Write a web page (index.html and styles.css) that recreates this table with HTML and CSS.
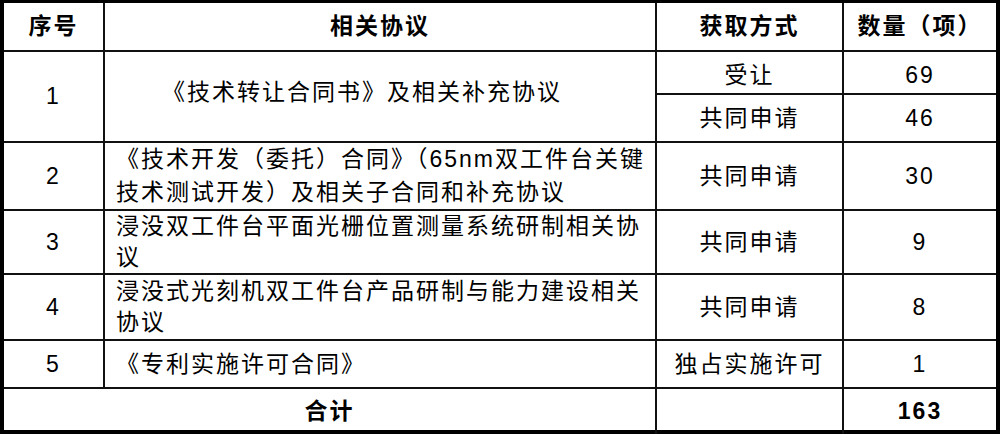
FILE: index.html
```html
<!DOCTYPE html>
<html lang="zh-CN">
<head>
<meta charset="utf-8">
<title>相关协议</title>
<link rel="stylesheet" href="styles.css">
</head>
<body>
<div class="frame">
  <table class="grid">
    <colgroup>
      <col class="c1"><col class="c2"><col class="c3"><col class="c4">
    </colgroup>
    <thead>
      <tr class="r-head">
        <th>序号</th>
        <th>相关协议</th>
        <th>获取方式</th>
        <th>数量（项）</th>
      </tr>
    </thead>
    <tbody>
      <tr class="r-1a">
        <td rowspan="2">1</td>
        <td rowspan="2" class="desc-center">《技术转让合同书》及相关补充协议</td>
        <td class="low">受让</td>
        <td class="low">69</td>
      </tr>
      <tr class="r-1b">
        <td>共同申请</td>
        <td>46</td>
      </tr>
      <tr class="r-2">
        <td>2</td>
        <td class="desc wide">《技术开发（委托）合同》（65nm双工件台关键<br>技术测试开发）及相关子合同和补充协议</td>
        <td>共同申请</td>
        <td>30</td>
      </tr>
      <tr class="r-3">
        <td>3</td>
        <td class="desc">浸没双工件台平面光栅位置测量系统研制相关协<br>议</td>
        <td>共同申请</td>
        <td>9</td>
      </tr>
      <tr class="r-4">
        <td>4</td>
        <td class="desc">浸没式光刻机双工件台产品研制与能力建设相关<br>协议</td>
        <td>共同申请</td>
        <td>8</td>
      </tr>
      <tr class="r-5">
        <td>5</td>
        <td class="desc">《专利实施许可合同》</td>
        <td>独占实施许可</td>
        <td>1</td>
      </tr>
      <tr class="r-total">
        <td colspan="2" class="strong">合计</td>
        <td></td>
        <td class="strong">163</td>
      </tr>
    </tbody>
  </table>
</div>
</body>
</html>
```

FILE: styles.css
```css
html, body {
  margin: 0;
  padding: 0;
  background: #ffffff;
}

.frame {
  box-sizing: border-box;
  width: 1000px;
  height: 434px;
  border-style: solid;
  border-color: #000000;
  border-width: 3px 4px 4px 4px;
  background: #ffffff;
}

.grid {
  width: 100%;
  height: 100%;
  table-layout: fixed;
  border-collapse: collapse;
  border-style: hidden;
  font-family: "Liberation Sans", "Noto Sans CJK SC", sans-serif;
  font-size: 23px;
  letter-spacing: 2px;
  color: #000000;
}

.c1 { width: 100px; }
.c2 { width: 552px; }
.c3 { width: 187px; }
.c4 { width: 153px; }

.grid th,
.grid td {
  border: 2px solid #111111;
  padding: 0;
  text-align: center;
  vertical-align: middle;
  line-height: 31px;
  white-space: nowrap;
  overflow: hidden;
}

.grid th {
  font-weight: bold;
}

.r-head { height: 48px; }
.r-1a { height: 43px; }
.r-1b { height: 48px; }
.r-2 { height: 64px; }
.r-3 { height: 64px; }
.r-4 { height: 66px; }
.r-5 { height: 48px; }
.r-total { height: 46px; }

.grid td.low {
  padding-top: 6px;
}

.grid td.desc {
  text-align: left;
  padding-left: 11px;
}

.grid td.desc.wide {
  line-height: 33px;
}

.grid td.desc-center {
  padding-right: 36px;
  padding-bottom: 8px;
}

.grid td.strong {
  font-weight: bold;
}
```
